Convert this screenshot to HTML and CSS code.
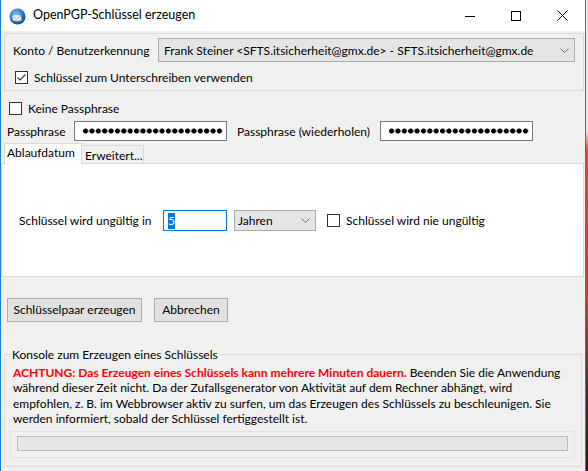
FILE: index.html
```html
<!DOCTYPE html>
<html lang="de">
<head>
<meta charset="utf-8">
<title>OpenPGP-Schlüssel erzeugen</title>
<link rel="stylesheet" href="styles.css">
</head>
<body>
<div class="window">
  <header class="titlebar">
    <svg class="app-icon" width="17" height="17" viewBox="0 0 17 17">
      <defs>
        <radialGradient id="globe" cx="0.4" cy="0.35" r="0.7">
          <stop offset="0" stop-color="#7fc0f2"/>
          <stop offset="0.6" stop-color="#2d77cf"/>
          <stop offset="1" stop-color="#163f86"/>
        </radialGradient>
      </defs>
      <circle cx="8.5" cy="8.5" r="8" fill="url(#globe)"/>
      <path d="M3 8.5 Q4 6 8 6.5 L12 7.5 L12.5 12.5 Q8 14 4 12.5 Z" fill="#e9edf2" stroke="#8a9aae" stroke-width="0.6"/>
      <path d="M3.3 8.7 L8 11 L12 7.7" fill="none" stroke="#8a9aae" stroke-width="0.6"/>
    </svg>
    <span class="title">OpenPGP-Schlüssel erzeugen</span>
    <div class="caption-buttons">
      <span class="cap"><svg width="10" height="10" viewBox="0 0 10 10"><path d="M0 5.5H10" stroke="#000" stroke-width="1"/></svg></span>
      <span class="cap"><svg width="10" height="10" viewBox="0 0 10 10"><rect x="0.5" y="0.5" width="9" height="9" fill="none" stroke="#000" stroke-width="1"/></svg></span>
      <span class="cap"><svg width="11" height="11" viewBox="0 0 11 11"><path d="M0.5 0.5L10.5 10.5M10.5 0.5L0.5 10.5" stroke="#000" stroke-width="1"/></svg></span>
    </div>
  </header>

  <main class="content">
    <section class="account-box">
      <div class="account-row">
        <span class="account-label">Konto / Benutzerkennung</span>
        <div class="select select-account">
          <span class="select-text">Frank Steiner &lt;SFTS.itsicherheit@gmx.de&gt; - SFTS.itsicherheit@gmx.de</span>
          <svg class="chevron" width="9" height="5" viewBox="0 0 9 5"><polyline points="0.5,0.5 4.5,4.5 8.5,0.5" fill="none" stroke="#707070" stroke-width="1"/></svg>
        </div>
      </div>
      <div class="check-row sign-row">
        <span class="checkbox"><svg width="11" height="11" viewBox="0 0 11 11"><polyline points="1.5,5.5 4,8 9.5,2.5" fill="none" stroke="#333" stroke-width="1.1"/></svg></span>
        <span>Schlüssel zum Unterschreiben verwenden</span>
      </div>
    </section>

    <div class="check-row nopass-row">
      <span class="checkbox"></span>
      <span>Keine Passphrase</span>
    </div>

    <div class="pass-row">
      <span class="pass-label">Passphrase</span>
      <div class="field pass-field"><span class="dots"></span></div>
      <span class="pass-label pass-label-repeat">Passphrase (wiederholen)</span>
      <div class="field pass-field"><span class="dots"></span></div>
    </div>

    <div class="tabs">
      <div class="tab tab-active">Ablaufdatum</div>
      <div class="tab tab-inactive">Erweitert...</div>
    </div>
    <div class="tab-panel">
      <div class="expiry-row">
        <span class="expiry-label">Schlüssel wird ungültig in</span>
        <div class="field num-field"><span class="selected-text">5</span></div>
        <div class="select select-unit">
          <span class="select-text">Jahren</span>
          <svg class="chevron" width="9" height="5" viewBox="0 0 9 5"><polyline points="0.5,0.5 4.5,4.5 8.5,0.5" fill="none" stroke="#707070" stroke-width="1"/></svg>
        </div>
        <div class="check-row never-row">
          <span class="checkbox"></span>
          <span>Schlüssel wird nie ungültig</span>
        </div>
      </div>
    </div>

    <div class="button-row">
      <button class="btn btn-generate" type="button">Schlüsselpaar erzeugen</button>
      <button class="btn btn-cancel" type="button">Abbrechen</button>
    </div>

    <fieldset class="console">
      <legend class="console-legend">Konsole zum Erzeugen eines Schlüssels</legend>
      <p class="console-text"><strong class="warn">ACHTUNG: Das Erzeugen eines Schlüssels kann mehrere Minuten dauern.</strong> Beenden Sie die Anwendung<br>während dieser Zeit nicht. Da der Zufallsgenerator von Aktivität auf dem Rechner abhängt, wird<br>empfohlen, z. B. im Webbrowser aktiv zu surfen, um das Erzeugen des Schlüssels zu beschleunigen. Sie<br>werden informiert, sobald der Schlüssel fertiggestellt ist.</p>
      <div class="progress-frame"><div class="progress-bar"></div></div>
    </fieldset>
  </main>
</div>
</body>
</html>
```

FILE: styles.css
```css
* { box-sizing: border-box; }

html, body {
  margin: 0;
  padding: 0;
}

body {
  width: 588px;
  height: 471px;
  overflow: hidden;
  background: linear-gradient(180deg, #e8e8e8 0px, #e8e8e8 130px, #c9552b 150px, #b5482a 300px, #5a2f1e 380px, #2d1c14 471px);
  font-family: Lato, "Noto Sans", sans-serif;
  font-size: 12px;
  color: #000;
}

.window {
  width: 586px;
  height: 471px;
  border-left: 1px solid #1a7fd6;
  border-right: 1px solid #1a7fd6;
  background: #f0f0f0;
  display: flex;
  flex-direction: column;
}

/* Title bar */
.titlebar {
  height: 31px;
  flex: none;
  background: #fff;
  display: flex;
  align-items: center;
  padding-left: 8px;
}

.app-icon { flex: none; margin-top: 1px; }

.title {
  margin-left: 7px;
  font-size: 12.5px;
  line-height: 16px;
  margin-top: -1px;
}

.caption-buttons {
  margin-left: auto;
  display: flex;
  height: 31px;
}

.cap {
  width: 46px;
  height: 31px;
  display: flex;
  align-items: center;
  justify-content: center;
}

/* Content */
.content {
  flex: 1;
  display: flex;
  flex-direction: column;
  line-height: 15px;
}

.account-box {
  margin: 2px 1px 0 3px;
  height: 58px;
  border: 1px solid #dadada;
  padding: 4px 8px 0 8px;
}

.account-row {
  display: flex;
  align-items: center;
  height: 24px;
  white-space: nowrap;
}

.account-label { width: 145px; flex: none; }

.select {
  display: flex;
  align-items: center;
  height: 24px;
  background: #e5e5e5;
  border: 1px solid #acacac;
  padding-left: 5px;
  padding-right: 5px;
  white-space: nowrap;
}

.select-account { width: 417px; }

.select .chevron { margin-left: auto; flex: none; }

.check-row {
  display: flex;
  align-items: center;
  height: 17px;
  white-space: nowrap;
}

.checkbox {
  width: 13px;
  height: 13px;
  flex: none;
  background: #fff;
  border: 1px solid #333;
  margin-right: 6px;
  display: flex;
  align-items: center;
  justify-content: center;
}

.sign-row {
  margin-top: 7px;
  padding-left: 2px;
}

.nopass-row {
  margin-top: 9px;
  padding-left: 8px;
}

/* Passphrase */
.pass-row {
  margin-top: 4px;
  height: 20px;
  display: grid;
  grid-template-columns: 67px 153px 153px 153px;
  align-items: center;
  padding-left: 6px;
  white-space: nowrap;
}

.pass-label-repeat { padding-left: 10px; }

.field {
  background: #fff;
  border: 1px solid #7a7a7a;
  height: 20px;
  display: flex;
  align-items: center;
}

.dots {
  display: block;
  margin-left: 8px;
  width: 140px;
  height: 6px;
  background-image: radial-gradient(circle at 2.6px 3px, #000 0, #000 2.2px, rgba(0,0,0,0) 2.9px);
  background-size: 6.38px 6px;
  background-repeat: repeat-x;
}

/* Tabs */
.tabs {
  margin-top: 2px;
  margin-left: 3px;
  height: 20px;
  display: flex;
  align-items: flex-end;
}

.tab {
  border: 1px solid #d9d9d9;
  border-bottom: none;
  white-space: nowrap;
}

.tab-active {
  position: relative;
  z-index: 1;
  width: 78px;
  height: 21px;
  margin-bottom: -1px;
  background: #fff;
  padding: 1px 0 0 2px;
}

.tab-inactive {
  width: 63px;
  height: 18px;
  margin-left: -1px;
  background: #f0f0f0;
  padding: 2px 0 0 3px;
}

.tab-panel {
  margin-right: 1px;
  height: 114px;
  background: #fff;
  border: 1px solid #d9d9d9;
  padding: 46px 0 0 17px;
}

.expiry-row {
  display: flex;
  align-items: center;
  height: 21px;
  white-space: nowrap;
}

.expiry-label { width: 144px; flex: none; }

.num-field {
  width: 64px;
  height: 21px;
  border-color: #0078d7;
  padding-left: 4px;
}

.selected-text {
  background: #0078d7;
  color: #fff;
  line-height: 16px;
  padding-right: 0.5px;
}

.select-unit {
  width: 82px;
  height: 21px;
  margin-left: 7px;
  padding-left: 3px;
  padding-right: 5px;
}

.never-row {
  margin-left: 11px;
}

/* Buttons */
.button-row {
  margin-top: 21px;
  margin-left: 6px;
  display: flex;
  gap: 12px;
}

.btn {
  height: 24px;
  background: #e1e1e1;
  border: 1px solid #adadad;
  font-family: inherit;
  font-size: 12px;
  color: #000;
  padding: 0 0 1px 0;
  line-height: 15px;
  white-space: nowrap;
}

.btn-generate { width: 135px; }
.btn-cancel { width: 74px; }

/* Console */
.console {
  margin: 25px 3px 0 3px;
  padding: 0 5px 8px 5px;
  border: 1px solid #dcdcdc;
  min-width: 0;
  height: 120px;
}

.console-legend {
  padding: 0 2px;
  line-height: 15px;
}

.console-text {
  margin: 3px 0 0 3px;
  line-height: 15.3px;
  white-space: nowrap;
}

.warn {
  color: #ff0000;
  font-weight: bold;
}

.progress-frame {
  margin-top: 5px;
  height: 27px;
  border: 1px solid #e3e3e3;
  padding: 4px 6px 0 6px;
  margin-right: 1px;
}

.progress-bar {
  height: 15px;
  background: #e6e6e6;
  border: 1px solid #bcbcbc;
}
```
